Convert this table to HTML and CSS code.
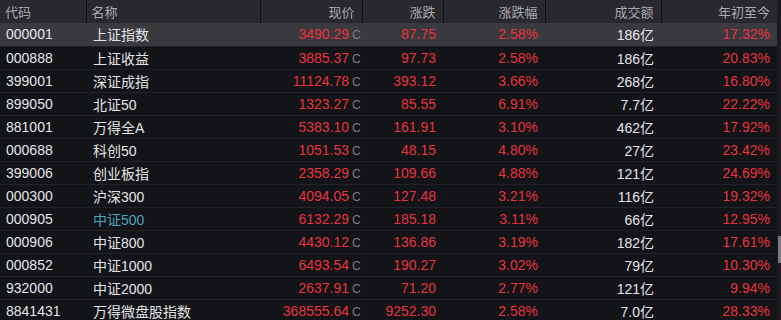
FILE: index.html
```html
<!DOCTYPE html>
<html lang="zh-CN">
<head>
  <meta charset="UTF-8">
  <title>指数行情</title>
  <link rel="stylesheet" href="styles.css">
</head>
<body>
  <div class="wrap">
    <table class="quotes">
      <colgroup>
        <col class="c-code"><col class="c-name"><col class="c-price"><col class="c-chg"><col class="c-pct"><col class="c-amt"><col class="c-ytd">
      </colgroup>
      <thead>
        <tr><th class="l">代码</th><th class="l">名称</th><th>现价</th><th>涨跌</th><th>涨跌幅</th><th>成交额</th><th>年初至今</th></tr>
      </thead>
      <tbody id="rows"></tbody>
    </table>
    <div class="scroll"><div class="thumb"></div></div>
  </div>

  <script>
    const data = [
      ["000001", "上证指数", "3490.29", "87.75", "2.58%", "186亿", "17.32%"],
      ["000888", "上证收益", "3885.37", "97.73", "2.58%", "186亿", "20.83%"],
      ["399001", "深证成指", "11124.78", "393.12", "3.66%", "268亿", "16.80%"],
      ["899050", "北证50", "1323.27", "85.55", "6.91%", "7.7亿", "22.22%"],
      ["881001", "万得全A", "5383.10", "161.91", "3.10%", "462亿", "17.92%"],
      ["000688", "科创50", "1051.53", "48.15", "4.80%", "27亿", "23.42%"],
      ["399006", "创业板指", "2358.29", "109.66", "4.88%", "121亿", "24.69%"],
      ["000300", "沪深300", "4094.05", "127.48", "3.21%", "116亿", "19.32%"],
      ["000905", "中证500", "6132.29", "185.18", "3.11%", "66亿", "12.95%"],
      ["000906", "中证800", "4430.12", "136.86", "3.19%", "182亿", "17.61%"],
      ["000852", "中证1000", "6493.54", "190.27", "3.02%", "79亿", "10.30%"],
      ["932000", "中证2000", "2637.91", "71.20", "2.77%", "121亿", "9.94%"],
      ["8841431", "万得微盘股指数", "368555.64", "9252.30", "2.58%", "7.0亿", "28.33%"]
    ];

    const body = document.getElementById("rows");
    data.forEach((r, i) => {
      const sel = i === 0 ? ' class="sel"' : "";
      const nameCls = r[0] === "000905" ? "name link" : "name";
      body.innerHTML += `<tr${sel}><td class="code">${r[0]}</td><td class="${nameCls}">${r[1]}</td>` +
        `<td class="up price">${r[2]}<span class="flag">C</span></td><td class="up">${r[3]}</td>` +
        `<td class="up">${r[4]}</td><td class="amt">${r[5]}</td><td class="up">${r[6]}</td></tr>`;
    });
  </script>
</body>
</html>
```

FILE: styles.css
```css
body { margin: 0; background: #131418; font-family: "Liberation Sans", "Noto Sans CJK SC", sans-serif; overflow: hidden; }
.wrap { position: relative; width: 781px; height: 320px; overflow: hidden; }
.quotes { width: 777px; border-collapse: collapse; table-layout: fixed; }
.c-code { width: 86px; }
.c-name { width: 174px; }
.c-price { width: 102px; }
.c-chg { width: 81px; }
.c-pct { width: 102px; }
.c-amt { width: 116px; }
.c-ytd { width: 116px; }
th { height: 23px; padding: 0 7px 0 0; background: #28282d; color: #a9a9ad; font-weight: normal; font-size: 13px; text-align: right; border-right: 1px solid #0f0f12; box-sizing: border-box; }
th:last-child { border-right: none; }
th.l { text-align: left; padding-left: 5px; }
td { height: 23px; padding: 0 7px 0 0; font-size: 14px; text-align: right; white-space: nowrap; border-top: 1px solid #222328; box-sizing: border-box; color: #e4e4e6; }
tbody tr:first-child td { border-top: none; }
tr.sel td { background: #39393e; }
td.code { text-align: left; padding-left: 6px; }
td.name { text-align: left; padding-left: 7px; }
td.link { color: #4aa3b6; }
td.up { color: #e8333f; }
td.price { padding-right: 0; }
.flag { display: inline-block; width: 10px; margin-left: 3px; text-align: left; color: #7d7d80; font-size: 12px; }
.scroll { position: absolute; top: 0; right: 0; width: 4px; height: 320px; background: #1b1b1f; }
.thumb { position: absolute; top: 236px; left: 1px; width: 3px; height: 27px; background: #7a7a7e; }
```
